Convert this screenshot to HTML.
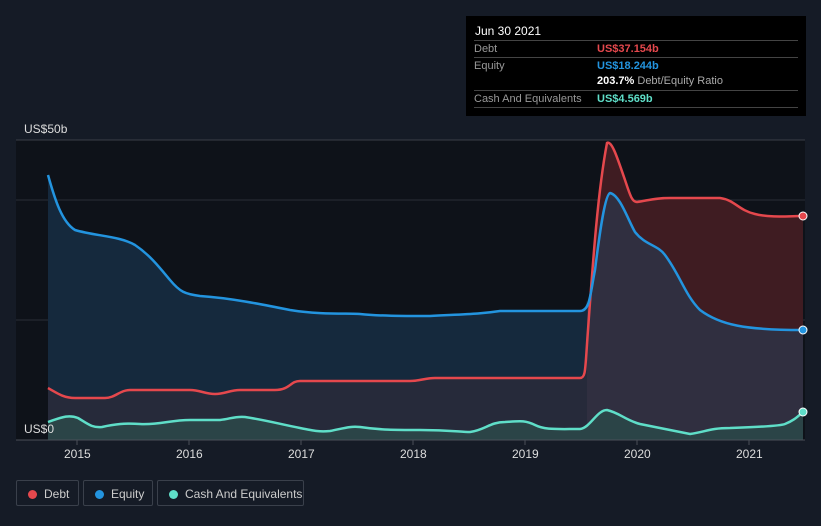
<!DOCTYPE html>
<html><head><style>
body{margin:0;background:#151b26;width:821px;height:526px;overflow:hidden;font-family:"Liberation Sans",sans-serif;}
.tt{position:absolute;left:466px;top:16px;width:340px;height:100px;background:#000;}
.tt .h{position:absolute;left:9px;top:8px;color:#fff;font-size:12px;}
.row{position:absolute;left:8px;width:324px;border-top:1px solid #444;font-size:11px;color:#999;height:16px;line-height:16px;}
.row b{position:absolute;left:123px;font-weight:bold;}
.leg{position:absolute;top:480px;height:26px;border:1px solid #3a404b;border-radius:2px;color:#ccc;font-size:12px;line-height:26px;box-sizing:border-box;}
.leg i{position:absolute;left:11px;top:9px;width:9px;height:9px;border-radius:50%;}
.leg span{position:absolute;left:27px;}
.ax{position:absolute;color:#ddd;font-size:12px;}
</style></head><body>
<svg width="821" height="526" style="position:absolute;left:0;top:0">
<rect x="16" y="140" width="789" height="300" fill="#0e1219"/>
<line x1="16" y1="140" x2="805" y2="140" stroke="#3a3f48"/>
<line x1="16" y1="200" x2="805" y2="200" stroke="#2a2f38"/>
<line x1="16" y1="320" x2="805" y2="320" stroke="#2a2f38"/>
<path d="M48,388 C60,395 65,398 75,398 L105,398 C115,398 120,390 130,390 L190,390 C200,390 205,394 215,394 C225,394 230,390 240,390 L275,390 C290,390 290,381 300,381 L410,381 C420,381 425,378 435,378 L580,378 C586,378 585,370 588,330 C593,260 598,190 607,143 C612,140 618,160 625,180 C630,195 632,202 637,202 C650,200 655,198 670,198 L720,198 C735,200 738,210 755,214 C770,218 790,216 803,216 L803,440 L48,440Z" fill="#3f1c22"/>
<path d="M48,175 C55,200 62,222 75,230 C95,236 120,236 135,245 C150,255 160,268 170,280 C180,292 185,294 200,296 C230,298 260,304 290,310 C320,315 350,313 360,314 C380,316 400,316 430,316 C470,314 480,314 500,311 L580,311 C590,311 590,295 595,270 C600,230 605,195 610,193 C620,195 628,220 635,232 C645,245 658,245 665,255 C680,275 685,295 700,310 C720,325 745,330 803,330 L803,440 L48,440Z" fill="#2f3042" opacity="0.95"/>
<path d="M48,175 C55,200 62,222 75,230 C95,236 120,236 135,245 C150,255 160,268 170,280 C180,292 185,294 200,296 C230,298 260,304 290,310 C320,315 350,313 360,314 C380,316 400,316 430,316 C470,314 480,314 500,311 L580,311 C585,311 586,305 587,300 L587,440 L48,440Z" fill="#15293d"/>
<path d="M48,388 C60,395 65,398 75,398 L105,398 C115,398 120,390 130,390 L190,390 C200,390 205,394 215,394 C225,394 230,390 240,390 L275,390 C290,390 290,381 300,381 L410,381 C420,381 425,378 435,378 L580,378 C584,378 586,374 587,360 L587,440 L48,440Z" fill="#262a3a"/>
<path d="M48,422 C60,418 68,414 78,418 C88,424 92,428 102,427 C115,424 125,423 140,424 C160,425 170,420 190,420 L220,420 C230,419 235,416 245,417 C265,420 280,424 300,428 C315,431 320,432 330,431 C345,428 350,426 360,427 C380,430 395,430 420,430 C450,430 460,432 470,432 C485,430 490,422 505,422 C520,421 525,420 535,425 C545,430 555,429 580,429 C590,428 597,410 607,410 C620,413 625,420 640,424 C660,428 670,430 690,434 C705,432 710,428 730,428 C760,427 780,426 785,424 C795,420 798,416 803,412 L803,440 L48,440Z" fill="#2b4447"/>
<path d="M48,388 C60,395 65,398 75,398 L105,398 C115,398 120,390 130,390 L190,390 C200,390 205,394 215,394 C225,394 230,390 240,390 L275,390 C290,390 290,381 300,381 L410,381 C420,381 425,378 435,378 L580,378 C586,378 585,370 588,330 C593,260 598,190 607,143 C612,140 618,160 625,180 C630,195 632,202 637,202 C650,200 655,198 670,198 L720,198 C735,200 738,210 755,214 C770,218 790,216 803,216" fill="none" stroke="#e5484d" stroke-width="2.5"/>
<path d="M48,175 C55,200 62,222 75,230 C95,236 120,236 135,245 C150,255 160,268 170,280 C180,292 185,294 200,296 C230,298 260,304 290,310 C320,315 350,313 360,314 C380,316 400,316 430,316 C470,314 480,314 500,311 L580,311 C590,311 590,295 595,270 C600,230 605,195 610,193 C620,195 628,220 635,232 C645,245 658,245 665,255 C680,275 685,295 700,310 C720,325 745,330 803,330" fill="none" stroke="#2394df" stroke-width="2.5"/>
<path d="M48,422 C60,418 68,414 78,418 C88,424 92,428 102,427 C115,424 125,423 140,424 C160,425 170,420 190,420 L220,420 C230,419 235,416 245,417 C265,420 280,424 300,428 C315,431 320,432 330,431 C345,428 350,426 360,427 C380,430 395,430 420,430 C450,430 460,432 470,432 C485,430 490,422 505,422 C520,421 525,420 535,425 C545,430 555,429 580,429 C590,428 597,410 607,410 C620,413 625,420 640,424 C660,428 670,430 690,434 C705,432 710,428 730,428 C760,427 780,426 785,424 C795,420 798,416 803,412" fill="none" stroke="#5fdec8" stroke-width="2.5"/>
<circle cx="803" cy="216" r="4" fill="#e5484d" stroke="#fff"/>
<circle cx="803" cy="330" r="4" fill="#2394df" stroke="#fff"/>
<circle cx="803" cy="412" r="4" fill="#5fdec8" stroke="#fff"/>
<line x1="16" y1="440" x2="805" y2="440" stroke="#4a4f58"/>
<g stroke="#4a4f58"><line x1="77" y1="440" x2="77" y2="445"/><line x1="189" y1="440" x2="189" y2="445"/><line x1="301" y1="440" x2="301" y2="445"/><line x1="413" y1="440" x2="413" y2="445"/><line x1="525" y1="440" x2="525" y2="445"/><line x1="637" y1="440" x2="637" y2="445"/><line x1="749" y1="440" x2="749" y2="445"/></g>
</svg>
<div class="ax" style="left:24px;top:122px">US$50b</div>
<div class="ax" style="left:24px;top:422px">US$0</div>
<div class="ax" style="left:64px;top:447px">2015</div>
<div class="ax" style="left:176px;top:447px">2016</div>
<div class="ax" style="left:288px;top:447px">2017</div>
<div class="ax" style="left:400px;top:447px">2018</div>
<div class="ax" style="left:512px;top:447px">2019</div>
<div class="ax" style="left:624px;top:447px">2020</div>
<div class="ax" style="left:736px;top:447px">2021</div>
<div class="tt"><div class="h">Jun 30 2021</div>
<div class="row" style="top:24px">Debt<b style="color:#e5484d">US$37.154b</b></div>
<div class="row" style="top:41px">Equity<b style="color:#2394df">US$18.244b</b></div>
<div class="row" style="top:57px;border-top:none"><b style="color:#fff">203.7% <span style="font-weight:normal;color:#aaa">Debt/Equity Ratio</span></b></div>
<div class="row" style="top:74px">Cash And Equivalents<b style="color:#5fdec8">US$4.569b</b></div>
<div class="row" style="top:91px;height:0"></div>
</div>
<div class="leg" style="left:16px;width:63px"><i style="background:#e5484d"></i><span>Debt</span></div>
<div class="leg" style="left:83px;width:70px"><i style="background:#2394df"></i><span>Equity</span></div>
<div class="leg" style="left:157px;width:147px"><i style="background:#5fdec8"></i><span>Cash And Equivalents</span></div>
</body></html>
